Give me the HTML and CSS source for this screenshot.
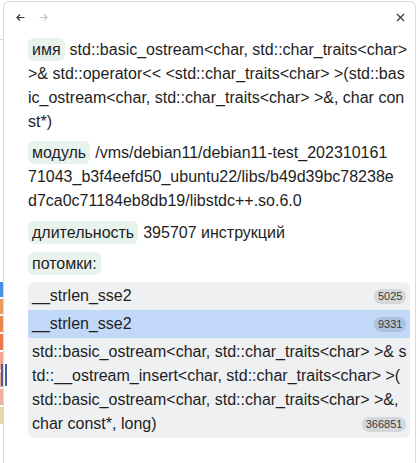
FILE: index.html
```html
<!DOCTYPE html>
<html lang="ru">
<head>
<meta charset="utf-8">
<title>Детали</title>
<link rel="stylesheet" href="styles.css">
</head>
<body>
<div class="flame">
  <div class="flame-top"></div>
  <div class="flame-bars">
    <div class="bar c1"></div>
    <div class="bar c2"></div>
    <div class="bar c3"></div>
    <div class="bar c4"></div>
    <div class="bar c5"></div>
    <div class="bar c6"></div>
    <div class="bar c7"></div>
    <div class="bar c8"></div>
  </div>
  <div class="handle"></div>
</div>
<div class="panel">
  <div class="nav">
    <div class="nav-left">
      <svg class="ico back" width="9" height="9" viewBox="0 0 9 9"><path d="M8.5 4.5H1M4 1.5L1 4.5l3 3" fill="none" stroke="currentColor" stroke-width="1.2"/></svg>
      <svg class="ico fwd" width="9" height="9" viewBox="0 0 9 9"><path d="M0.5 4.5H8M5 1.5l3 3-3 3" fill="none" stroke="currentColor" stroke-width="1.2"/></svg>
    </div>
    <svg class="ico close" width="9" height="9" viewBox="0 0 9 9"><path d="M1 1l7 7M8 1L1 8" fill="none" stroke="currentColor" stroke-width="1.3"/></svg>
  </div>
  <div class="content">
    <div class="section"><span class="label">имя</span><span class="ln">std::basic_ostream&lt;char, std::char_traits&lt;char&gt;</span><br><span class="ln">&gt;&amp; std::operator&lt;&lt; &lt;std::char_traits&lt;char&gt; &gt;(std::bas</span><br><span class="ln">ic_ostream&lt;char, std::char_traits&lt;char&gt; &gt;&amp;, char con</span><br><span class="ln">st*)</span></div>
    <div class="section mod"><span class="label">модуль</span><span class="ln">/vms/debian11/debian11-test_202310161</span><br><span class="ln">71043_b3f4eefd50_ubuntu22/libs/b49d39bc78238e</span><br><span class="ln">d7ca0c71184eb8db19/libstdc++.so.6.0</span></div>
    <div class="section"><span class="label">длительность</span><span class="ln">395707 инструкций</span></div>
    <div class="section"><span class="label">потомки:</span></div>
    <div class="list">
      <div class="row"><span class="ln">__strlen_sse2</span><span class="count">5025</span></div>
      <div class="row selected"><span class="ln">__strlen_sse2</span><span class="count">9331</span></div>
      <div class="row"><span class="ln">std::basic_ostream&lt;char, std::char_traits&lt;char&gt; &gt;&amp; s</span><br><span class="ln">td::__ostream_insert&lt;char, std::char_traits&lt;char&gt; &gt;(</span><br><span class="ln">std::basic_ostream&lt;char, std::char_traits&lt;char&gt; &gt;&amp;,</span><br><span class="ln">char const*, long)</span><span class="count">366851</span></div>
    </div>
  </div>
</div>
</body>
</html>
```
FILE: styles.css
```css
html, body {
  margin: 0;
  padding: 0;
  height: 100%;
  background: #ffffff;
}
body {
  display: flex;
  overflow: hidden;
  font-family: "Liberation Sans", Arial, sans-serif;
  font-size: 16px;
  color: #1e1e1e;
}
.flame {
  position: relative;
  width: 3px;
  flex: none;
  display: flex;
  flex-direction: column;
  z-index: 1;
}
.flame-top {
  height: 39px;
  border-bottom: 1px solid #d4d4d4;
  margin-bottom: 242px;
}
.flame-bars {
  display: flex;
  flex-direction: column;
  gap: 2px;
}
.bar { height: 16px; }
.c1 { background: #4a8fe6; height: 15px; }
.c2 { background: #e99a5c; height: 15px; }
.c3 { background: #e8874f; }
.c4 { background: #e97a50; }
.c5 { background: #f0a693; height: 18px; }
.c6 { background: #f2aa98; height: 15px; }
.c7 { background: #efb1a1; }
.c8 { background: #e6d8a8; height: 17px; }
.handle {
  position: absolute;
  left: 1px;
  top: 364px;
  width: 2px;
  height: 22px;
  border-left: 2px solid #4d5f8e;
  border-right: 2px solid #4d5f8e;
}

.panel {
  flex: 1;
  margin: 1px 4px 0 0;
  border: 1px solid #dadada;
  border-bottom: none;
  border-radius: 6px 6px 0 0;
  display: flex;
  flex-direction: column;
}
.nav {
  height: 31px;
  margin-bottom: 5px;
  padding: 0 10px 0 12px;
  display: flex;
  align-items: center;
  justify-content: space-between;
}
.nav-left {
  display: flex;
  align-items: center;
  gap: 14px;
}
.ico { display: block; }
.back { color: #333333; }
.fwd { color: #c4c4c4; }
.close { color: #3a3a3a; }

.content {
  padding: 0 5px 0 24px;
}
.section {
  line-height: 24px;
  white-space: nowrap;
  margin-bottom: 7px;
}
.section.mod {
  margin-bottom: 8px;
}
.label {
  background: #e8f3ed;
  border-radius: 6px;
  padding: 3px 4px;
  margin-right: 5px;
}
.list {
  margin-top: -1px;
  background: #eff0f2;
  border-radius: 6px;
  overflow: hidden;
}
.row {
  padding: 2px 4px;
  line-height: 24px;
  white-space: nowrap;
}
.row::after {
  content: "";
  display: block;
  clear: both;
}
.row.selected {
  background: #c2d8f8;
}
.count {
  float: right;
  margin-top: 5px;
  font-size: 11px;
  line-height: 15px;
  padding: 0 4px;
  border-radius: 7px;
  background: rgba(0, 0, 0, 0.1);
  color: #3a3a3a;
}
```
